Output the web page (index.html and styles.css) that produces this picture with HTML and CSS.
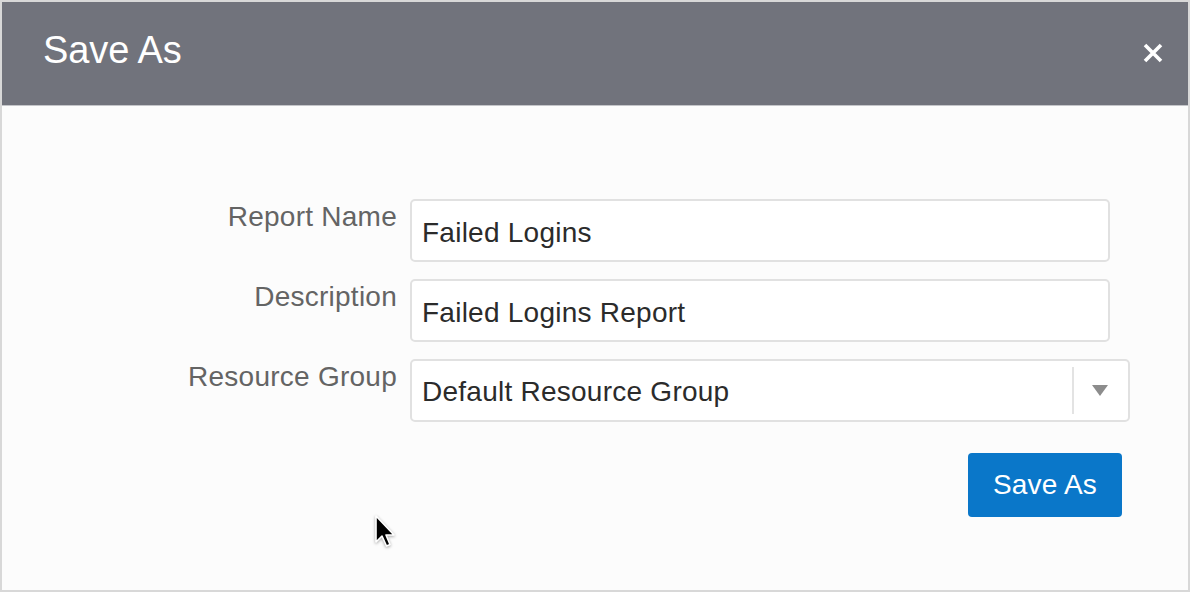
FILE: index.html
```html
<!DOCTYPE html>
<html lang="en">
<head>
<meta charset="utf-8">
<title>Save As</title>
<link rel="stylesheet" href="styles.css">
</head>
<body>
<div class="dialog">
  <div class="dialog-header">
    <h1 class="dialog-title">Save As</h1>
    <button class="close-btn" aria-label="Close">
      <svg width="20" height="20" viewBox="0 0 20 20"><path d="M2 2 L18 18 M18 2 L2 18" stroke="#fff" stroke-width="3.6" stroke-linecap="butt"/></svg>
    </button>
  </div>
  <div class="dialog-body">
    <form class="form-grid">
      <label class="form-label">Report Name</label>
      <div class="text-input">Failed Logins</div>
      <label class="form-label">Description</label>
      <div class="text-input">Failed Logins Report</div>
      <label class="form-label">Resource Group</label>
      <div class="select-input">
        <span class="select-value">Default Resource Group</span>
        <span class="select-divider"></span>
        <span class="select-arrow"></span>
      </div>
      <div class="actions">
        <button type="button" class="primary-btn">Save As</button>
      </div>
    </form>
  </div>
  <svg class="cursor" width="24" height="36" viewBox="0 0 24 36">
    <path d="M2 2 L2 28 L8 22 L12.5 32 L16 30.5 L12 21 L20 21 Z" fill="#000" stroke="#fff" stroke-width="1.6" stroke-linejoin="round"/>
  </svg>
</div>
</body>
</html>
```

FILE: styles.css
```css
html, body {
  margin: 0;
  padding: 0;
  background: #fcfcfc;
}

.dialog {
  position: relative;
  box-sizing: border-box;
  width: 1190px;
  height: 592px;
  border: 2px solid #d8d8d8;
  background: #fcfcfc;
  font-family: "Liberation Sans", Arial, sans-serif;
  display: flex;
  flex-direction: column;
}

.dialog-header {
  box-sizing: border-box;
  height: 104px;
  background: #71737c;
  border-bottom: 1px solid #c4c5c9;
  display: flex;
  align-items: center;
  justify-content: space-between;
  padding: 0 25px 6px 41px;
}

.dialog-title {
  margin: 0;
  color: #fff;
  font-weight: normal;
  font-size: 38px;
  letter-spacing: -0.1px;
  line-height: 44px;
  padding-bottom: 2px;
}

.close-btn {
  background: none;
  border: 0;
  padding: 0;
  width: 20px;
  height: 20px;
  display: flex;
  cursor: pointer;
  margin-top: 4px;
}

.dialog-body {
  flex: 1;
  padding-top: 93px;
}

.form-grid {
  margin: 0;
  display: grid;
  grid-template-columns: 395px 720px;
  column-gap: 13px;
  row-gap: 17px;
}

.form-label {
  text-align: right;
  color: #646464;
  font-size: 28px;
  letter-spacing: 0.25px;
  line-height: 32px;
  padding-top: 2px;
}

.text-input {
  box-sizing: border-box;
  width: 700px;
  height: 63px;
  border: 2px solid #e1e1e1;
  border-radius: 5px;
  background: #fff;
  color: #2b2b2b;
  font-size: 28px;
  letter-spacing: 0.25px;
  line-height: 32px;
  padding: 16px 10px 0 10px;
}

.select-input {
  box-sizing: border-box;
  width: 720px;
  height: 63px;
  border: 2px solid #e1e1e1;
  border-radius: 5px;
  background: #fff;
  color: #2b2b2b;
  font-size: 28px;
  letter-spacing: 0.25px;
  line-height: 32px;
  display: flex;
  align-items: center;
  padding-left: 10px;
}

.select-value {
  flex: 1;
  padding-top: 2px;
}

.select-divider {
  width: 2px;
  height: 47px;
  background: #e3e3e3;
  margin-right: 18px;
}

.select-arrow {
  width: 0;
  height: 0;
  border-left: 8.5px solid transparent;
  border-right: 8.5px solid transparent;
  border-top: 11px solid #8c8c8c;
  margin-right: 20px;
}

.actions {
  grid-column: 2;
  display: flex;
  justify-content: flex-end;
  padding-right: 8px;
  padding-top: 14px;
}

.primary-btn {
  box-sizing: border-box;
  width: 154px;
  height: 64px;
  background: #0a77c9;
  color: #fff;
  border: 0;
  border-radius: 4px;
  font-family: "Liberation Sans", Arial, sans-serif;
  font-size: 28px;
  letter-spacing: 0.2px;
  padding: 0;
}

.cursor {
  position: absolute;
  left: 372px;
  top: 512px;
  filter: drop-shadow(0 1px 1.5px rgba(0,0,0,0.35));
}
```
